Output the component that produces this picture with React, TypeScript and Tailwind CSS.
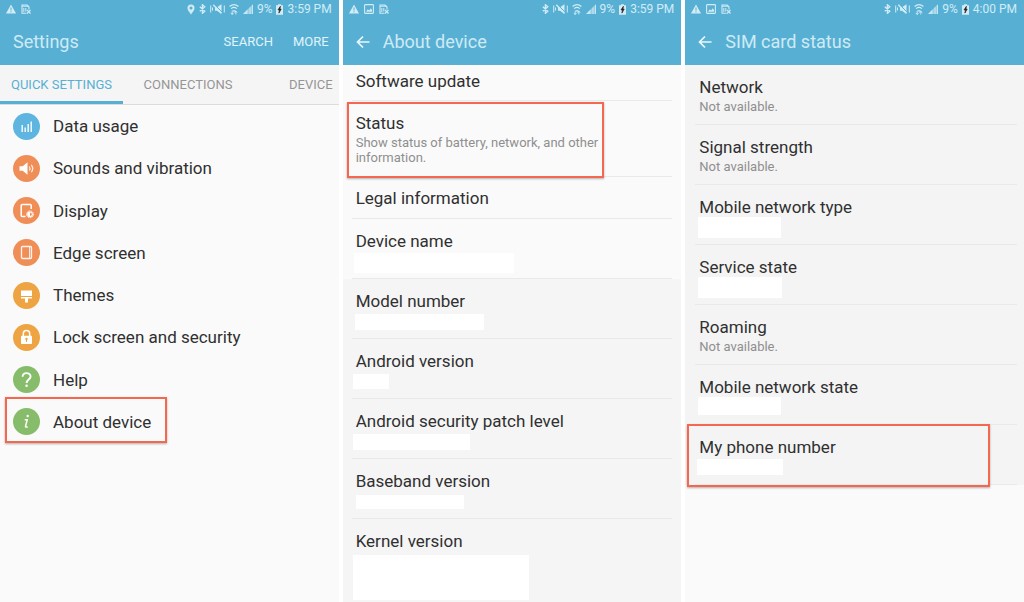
import type { ReactNode } from "react";
import { clsx } from "clsx";

type Setting = {
  label: string;
  color: string;
  icon: ReactNode;
  highlight?: boolean;
};

type Info = {
  title: string;
  detail?: string;
  /** Size and place of the blank that hides a private value. */
  blank?: string;
  size?: string;
  highlight?: string;
};

const SETTINGS: Setting[] = [
  { label: "Data usage", color: "bg-[#5eb5e0]", icon: <DataIcon /> },
  { label: "Sounds and vibration", color: "bg-[#f08e58]", icon: <SoundIcon /> },
  { label: "Display", color: "bg-[#f08e58]", icon: <DisplayIcon /> },
  { label: "Edge screen", color: "bg-[#f08e58]", icon: <EdgeIcon /> },
  { label: "Themes", color: "bg-[#eea443]", icon: <ThemesIcon /> },
  { label: "Lock screen and security", color: "bg-[#eea443]", icon: <LockIcon /> },
  { label: "Help", color: "bg-[#86bc6a]", icon: <HelpIcon /> },
  { label: "About device", color: "bg-[#86bc6a]", icon: <InfoIcon />, highlight: true },
];

const ABOUT: Info[] = [
  { title: "Software update", size: "h-9 pt-[6px]" },
  {
    title: "Status",
    detail: "Show status of battery, network, and other information.",
    size: "h-[76px] pt-3",
    highlight: "-left-[5px] top-px h-[76px] w-[257px]",
  },
  { title: "Legal information", size: "h-[42px] pt-[11px]" },
  { title: "Device name", blank: "-ml-[2px] mt-[2px] h-5 w-40" },
];

const VERSIONS: Info[] = [
  { title: "Model number", blank: "-ml-[1px] mt-[3px] h-4 w-[129px]" },
  { title: "Android version", blank: "-ml-[3px] mt-[3px] h-[15px] w-9" },
  { title: "Android security patch level", blank: "-ml-[3px] mt-[3px] h-4 w-[117px]" },
  { title: "Baseband version", blank: "mt-[4px] h-[14px] w-[108px]" },
  { title: "Kernel version", blank: "-ml-[3px] mt-[4px] h-[45px] w-44", size: "h-[82px] border-b-0 pt-3" },
];

const SIM: Info[] = [
  { title: "Network", detail: "Not available." },
  { title: "Signal strength", detail: "Not available." },
  { title: "Mobile network type", blank: "-ml-[1px] h-[21px] w-[83px]" },
  { title: "Service state", blank: "-ml-[1px] h-[21px] w-[84px]" },
  { title: "Roaming", detail: "Not available." },
  { title: "Mobile network state", blank: "-ml-[1px] h-[18px] w-[83px]" },
  {
    title: "My phone number",
    blank: "-ml-[2px] mt-[2px] h-4 w-[86px]",
    highlight: "-left-2 -top-px h-[63px] w-[303px]",
  },
];

function DataIcon() {
  return (
    <svg viewBox="0 0 27 27" className="size-full" aria-hidden="true">
      <path d="M9.2 12v7M12.2 14.5V19M15.2 11v8M18.2 8.5V19" stroke="#fff" strokeOpacity=".9" strokeWidth="1.5" />
    </svg>
  );
}

function SoundIcon() {
  return (
    <svg viewBox="0 0 27 27" className="size-full" aria-hidden="true">
      <path d="M6.5 11.2h3.2l4.8-4v12.6l-4.8-4H6.5z" fill="#fff" />
      <path d="M16.3 11.5q1.5 2 0 4M18.3 9.8q2.8 3.700 0 7.400" fill="none" stroke="#fff" strokeOpacity=".85" strokeWidth="1.2" />
    </svg>
  );
}

function DisplayIcon() {
  return (
    <svg viewBox="0 0 27 27" className="size-full" aria-hidden="true">
      <path d="M12.5 19.5H9.2a1 1 0 0 1-1-1v-10a1 1 0 0 1 1-1h8a1 1 0 0 1 1 1V12" fill="none" stroke="#fff" strokeWidth="1.5" />
      <circle cx="17" cy="17.3" r="3.4" fill="none" stroke="#fff" strokeWidth="1" strokeDasharray="1.4 .6" />
      <circle cx="17" cy="17.3" r="2.8" fill="#fff" />
      <path d="M17 15.5a1.8 1.8 0 0 1 0 3.6z" fill="#f08e58" />
    </svg>
  );
}

function EdgeIcon() {
  return (
    <svg viewBox="0 0 27 27" className="size-full" aria-hidden="true">
      <rect x="8.5" y="7.5" width="10" height="12" rx="1" fill="none" stroke="#fff" strokeOpacity=".9" strokeWidth="1.3" />
      <path d="M16.6 8v11" stroke="#fff" strokeOpacity=".8" strokeWidth="1.2" />
    </svg>
  );
}

function ThemesIcon() {
  return (
    <svg viewBox="0 0 27 27" className="size-full" aria-hidden="true">
      <path d="M8 8.5h11v5.6H8zM8 15h11v1.6h-4v4h-3v-4H8z" fill="#fff" />
    </svg>
  );
}

function LockIcon() {
  return (
    <svg viewBox="0 0 27 27" className="size-full" aria-hidden="true">
      <path d="M10.3 12V9.8a3.2 3.2 0 0 1 6.4 0V12" fill="none" stroke="#fff" strokeWidth="1.5" />
      <rect x="8" y="11.7" width="11" height="8.3" rx=".8" fill="#fff" />
      <circle cx="13.5" cy="15" r="1.2" fill="#eea443" />
      <path d="M13.5 15v3" stroke="#eea443" strokeWidth="1" />
    </svg>
  );
}

function HelpIcon() {
  return (
    <svg viewBox="0 0 27 27" className="size-full" aria-hidden="true">
      <path d="M9.6 10.8c0-5 8-4.8 8-.3 0 3-4 3.2-4 6.5" fill="none" stroke="#fff" strokeWidth="1.9" />
      <circle cx="13.6" cy="19.8" r="1.3" fill="#fff" />
    </svg>
  );
}

function InfoIcon() {
  return (
    <svg viewBox="0 0 27 27" className="size-full" aria-hidden="true">
      <circle cx="14.7" cy="8" r="1.2" fill="#fff" />
      <path d="M11.7 11.8h2.5l-1.7 6.5q-.2 1.2 2.2.6" fill="none" stroke="#fff" strokeWidth="1.5" />
    </svg>
  );
}

function WarningIcon() {
  return (
    <svg viewBox="0 0 10 10" className="size-[10px]" aria-hidden="true">
      <path d="M5 .5l5 9H0z" fill="currentColor" />
      <path d="M5 3.5v3M5 7.3v1.1" stroke="#57b0d4" strokeWidth="1" />
    </svg>
  );
}

function PictureIcon() {
  return (
    <svg viewBox="0 0 10 10" className="size-[10px]" aria-hidden="true">
      <rect x=".6" y=".6" width="8.8" height="8.8" rx=".6" fill="none" stroke="currentColor" strokeWidth="1.1" />
      <path d="M2 7.8l1.8-2.6 1.4 1.3 1.5-2.3L8 6v1.8z" fill="currentColor" />
    </svg>
  );
}

function NoSimIcon() {
  return (
    <svg viewBox="0 0 10 10" className="size-[10px]" aria-hidden="true">
      <path d="M5.5 9.2H1V1h5l2 2v2.5" fill="none" stroke="currentColor" strokeWidth="1.1" />
      <path d="M1 2.2h6.5M2.8 4v4M4.8 4v3.5" stroke="currentColor" strokeWidth="1" />
      <path d="M6 6l3.500 3.500M9.500 6L6 9.500" stroke="currentColor" strokeWidth="1.1" />
    </svg>
  );
}

function PinIcon() {
  return (
    <svg viewBox="0 0 8 11" className="h-[11px] w-2" aria-hidden="true">
      <path d="M4 10.5C2.5 8 .5 6.2.5 3.9a3.5 3.5 0 0 1 7 0C7.5 6.2 5.5 8 4 10.5z" fill="currentColor" />
      <circle cx="4" cy="3.9" r="1.5" fill="#57b0d4" />
    </svg>
  );
}

function BluetoothIcon() {
  return (
    <svg viewBox="0 0 7 10" className="h-[10px] w-[7px]" aria-hidden="true">
      <path d="M.8 2.7l5 4.5L3.400 9.300V.7l2.400 2.100-5 4.500" fill="none" stroke="currentColor" strokeWidth="1.3" />
    </svg>
  );
}

function VibrateIcon() {
  return (
    <svg viewBox="0 0 15 10" className="h-[10px] w-[15px]" aria-hidden="true">
      <path d="M.7 1.500v7M14.300 1.500v7M2.500 3.500v3" stroke="currentColor" strokeWidth="1" />
      <path d="M5 3.200h2l4.500-3v9.600L7 6.800H5z" fill="currentColor" />
      <path d="M4.500.3l8 8.400" stroke="#57b0d4" strokeWidth="1" />
      <path d="M3.300.8l8 8.400" stroke="currentColor" strokeWidth="1.400" />
    </svg>
  );
}

function WifiIcon() {
  return (
    <svg viewBox="0 0 10 11" className="h-[11px] w-[10px]" aria-hidden="true">
      <path d="M.6 2.5q4.400-3.600 8.800 0M2.100 4.600q2.900-2.300 5.800 0" fill="none" stroke="currentColor" strokeWidth="1.2" />
      <path d="M3 6.2h4L5 8z" fill="currentColor" />
      <path d="M3.200 6.800v3.700M1.800 8.900l1.400 1.600 1.300-1.600M6.800 10.500V7M5.500 8.700L6.800 7l1.300 1.700" fill="none" stroke="currentColor" strokeWidth=".9" />
    </svg>
  );
}

function SignalIcon() {
  return (
    <svg viewBox="0 0 10 10" className="size-[10px]" aria-hidden="true">
      <path d="M10 0v10H0z" fill="currentColor" fillOpacity=".5" />
      <path d="M4.500 5.500V10H0zM6.500 3.500h1V10h-1zM9 1h1v9H9z" fill="currentColor" fillOpacity=".8" />
    </svg>
  );
}

function BatteryIcon() {
  return (
    <svg viewBox="0 0 7 11" className="h-[11px] w-[7px]" aria-hidden="true">
      <path d="M2 .3h3v1h2v9.400H0V1.300h2z" fill="currentColor" />
      <path d="M4.400 2.300L2 5.900h1.500l-.6 3.200L5.200 5.100H3.900z" fill="#2a2224" stroke="#2a2224" strokeWidth=".7" />
    </svg>
  );
}

function StatusBar({ time, location, picture }: { time: string; location?: boolean; picture?: boolean }) {
  return (
    <div className="flex h-[18px] items-center justify-between pr-[7px] pl-[6px] text-[#d2ecf6]">
      <div className="flex items-center gap-[5px]">
        <WarningIcon />
        {picture && <PictureIcon />}
        <NoSimIcon />
      </div>
      <div className="flex items-center gap-1 text-[12px] leading-[18px]">
        {location && <PinIcon />}
        <BluetoothIcon />
        <VibrateIcon />
        <WifiIcon />
        <SignalIcon />
        <span>9%</span>
        <BatteryIcon />
        <span>{time}</span>
      </div>
    </div>
  );
}

function BackButton() {
  return (
    <button type="button" aria-label="Back" className="mr-[13px] size-[14px] text-[#eaf6fb]">
      <svg viewBox="0 0 14 14" className="size-full" aria-hidden="true">
        <path d="M13.5 7H1.5M7 1.5L1.5 7 7 12.5" fill="none" stroke="currentColor" strokeWidth="1.7" />
      </svg>
    </button>
  );
}

function Highlight({ className }: { className: string }) {
  return (
    <span
      className={clsx(
        "pointer-events-none absolute border-2 border-[#f5674f] shadow-[0_1px_2px_rgba(0,0,0,0.3)]",
        className,
      )}
    />
  );
}

function InfoRow({ item }: { item: Info }) {
  return (
    <li className={clsx("relative border-[#e9e9e9] pr-16 pl-1", item.size ?? "h-[60px] pt-3", item.size?.includes("border-b-0") ? "" : "border-b")}>
      <h2 className="text-[17px] leading-5 text-[#303030]">{item.title}</h2>
      {item.detail && <p className="mt-[2px] text-[13px] leading-[15px] text-[#8f8f8f]">{item.detail}</p>}
      {item.blank && <div className={clsx("bg-white", item.blank)} />}
      {item.highlight && <Highlight className={item.highlight} />}
    </li>
  );
}

function SettingsPanel() {
  return (
    <section className="bg-[#fafafa]">
      <header className="bg-[#57b0d4]">
        <StatusBar time="3:59 PM" location />
        <div className="flex h-[47px] items-center pr-[10px] pl-[13px]">
          <h1 className="flex-1 text-lg text-[#cfeaf5]">Settings</h1>
          <div className="flex gap-5 text-[13px] text-[#e2f3f9]">
            <button type="button">SEARCH</button>
            <button type="button">MORE</button>
          </div>
        </div>
      </header>
      <nav className="flex h-10 justify-between border-b border-[#dcdcdc] bg-[#f5f5f5] text-[13px] text-[#959595]">
        <button type="button" className="border-b-[3px] border-[#57b0d4] px-[11px] pt-1 text-[#57b0d4]">
          QUICK SETTINGS
        </button>
        <button type="button" className="mr-9 border-b-[3px] border-transparent pt-1">
          CONNECTIONS
        </button>
        <button type="button" className="border-b-[3px] border-transparent pt-1 pr-[6px]">
          DEVICE
        </button>
      </nav>
      <ul className="grid h-[338px] auto-rows-fr">
        {SETTINGS.map((s) => (
          <li key={s.label} className="relative">
            <button type="button" className="flex h-full w-full items-center gap-[13px] pl-[13px] text-left">
              <span className={clsx("size-[27px] rounded-full", s.color)}>{s.icon}</span>
              <span className="text-[17px] leading-5 text-[#303030]">{s.label}</span>
            </button>
            {s.highlight && <Highlight className="-top-1 left-[5px] h-[46px] w-[162px]" />}
          </li>
        ))}
      </ul>
    </section>
  );
}

function SubHeader({ title, time }: { title: string; time: string }) {
  return (
    <header className="bg-[#57b0d4]">
      <StatusBar time={time} picture />
      <div className="flex h-[47px] items-center pl-[13px]">
        <BackButton />
        <h1 className="text-lg text-[#cfeaf5]">{title}</h1>
      </div>
    </header>
  );
}

function AboutPanel() {
  return (
    <section className="bg-[#f5f5f5]">
      <SubHeader title="About device" time="3:59 PM" />
      <ul className="bg-[#fafafa] px-[9px]">
        {ABOUT.map((item) => (
          <InfoRow key={item.title} item={item} />
        ))}
      </ul>
      <ul className="px-[9px]">
        {VERSIONS.map((item) => (
          <InfoRow key={item.title} item={item} />
        ))}
      </ul>
    </section>
  );
}

function SimPanel() {
  return (
    <section className="bg-[#fafafa]">
      <SubHeader title="SIM card status" time="4:00 PM" />
      <ul className="bg-[#f4f4f4] pr-[7px] pl-[10px]">
        {SIM.map((item) => (
          <InfoRow key={item.title} item={item} />
        ))}
      </ul>
    </section>
  );
}

export default function App() {
  return (
    <main className="grid min-h-screen grid-cols-3 gap-1 bg-white font-[Roboto,sans-serif]">
      <SettingsPanel />
      <AboutPanel />
      <SimPanel />
    </main>
  );
}
